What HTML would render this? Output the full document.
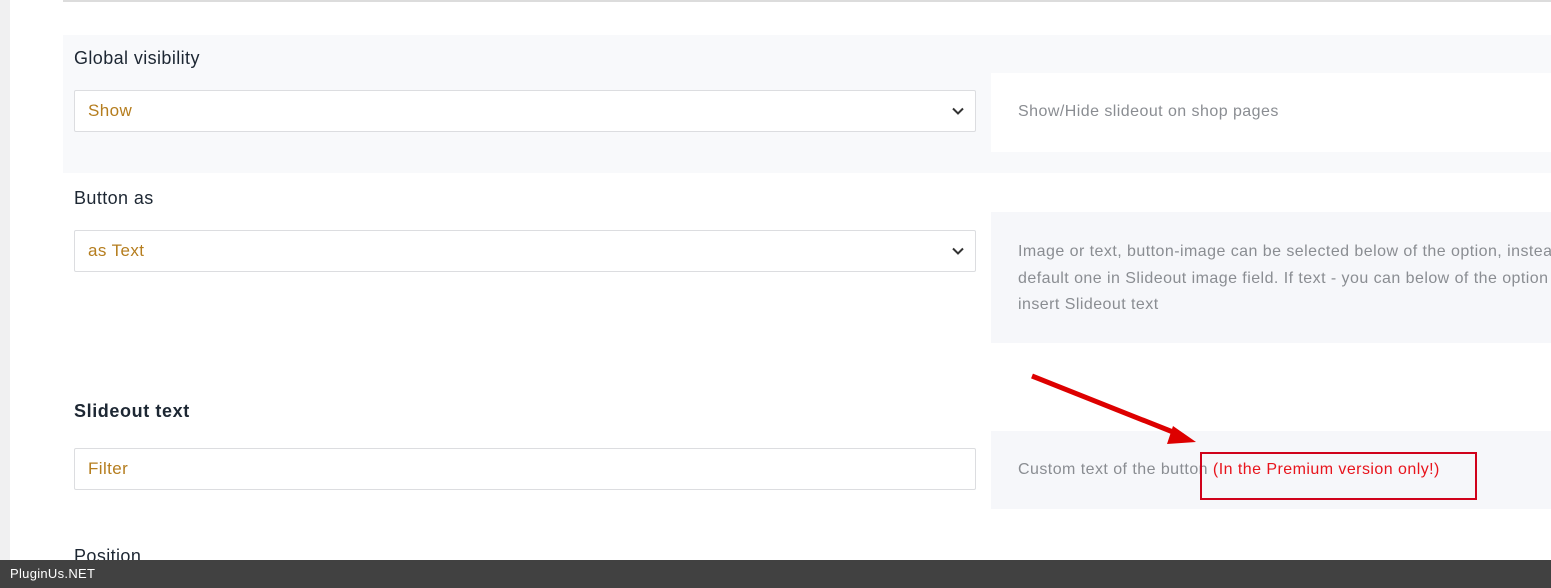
<!DOCTYPE html>
<html><head><style>
*{margin:0;padding:0;box-sizing:border-box}
body{width:1551px;height:588px;overflow:hidden;background:#fff;font-family:"Liberation Sans",sans-serif;position:relative}
.abs{position:absolute}
.lbl{font-size:18px;color:#1d2733;letter-spacing:0.4px}
.sel{background:#fff;border:1px solid #dcdde0;border-radius:2px;height:42px;width:902px;left:74px;color:#b57d1e;font-size:17px;padding:10px 13px;letter-spacing:0.4px}
.desc{font-size:16px;color:#8a8d92;line-height:26.5px;letter-spacing:0.45px}
.chev{position:absolute;right:10px;top:13px}
</style></head><body>
<div class="abs" style="left:0;top:0;width:10px;height:588px;background:#f0f0f1"></div>
<div class="abs" style="left:63px;top:0;width:1488px;height:2px;background:#dcdcdc"></div>
<div class="abs" style="left:63px;top:35px;width:1488px;height:138px;background:#f8f9fb"></div>
<div class="abs lbl" style="left:74px;top:48px">Global visibility</div>
<div class="abs sel" style="top:90px">Show<svg class="chev" width="14" height="14" viewBox="0 0 14 14"><path d="M2 4.5l5 5 5-5" fill="none" stroke="#333" stroke-width="2"/></svg></div>
<div class="abs" style="left:991px;top:73px;width:560px;height:79px;background:#fff"></div>
<div class="abs desc" style="left:1018px;top:99px">Show/Hide slideout on shop pages</div>

<div class="abs lbl" style="left:74px;top:188px">Button as</div>
<div class="abs sel" style="top:230px">as Text<svg class="chev" width="14" height="14" viewBox="0 0 14 14"><path d="M2 4.5l5 5 5-5" fill="none" stroke="#333" stroke-width="2"/></svg></div>
<div class="abs" style="left:991px;top:212px;width:560px;height:131px;background:#f6f7fa"></div>
<div class="abs desc" style="left:1018px;top:239px;white-space:nowrap">Image or text, button-image can be selected below of the option, instead<br>default one in Slideout image field. If text - you can below of the option<br>insert Slideout text</div>

<div class="abs lbl" style="left:74px;top:401px;font-weight:bold;font-size:18px;letter-spacing:0.6px">Slideout text</div>
<div class="abs sel" style="top:448px">Filter</div>
<div class="abs" style="left:991px;top:431px;width:560px;height:78px;background:#f6f7fa"></div>
<div class="abs desc" style="left:1018px;top:457px;white-space:nowrap">Custom text of the button <span style="color:#e8141c">(In the Premium version only!)</span></div>
<div class="abs" style="left:1200px;top:452px;width:277px;height:48px;border:2px solid #d0021b"></div>
<svg class="abs" style="left:1025px;top:370px" width="180" height="80"><line x1="7" y1="6" x2="158" y2="66" stroke="#d00" stroke-width="5"/><polygon points="171,72 148,56 142,74" fill="#d00"/></svg>

<div class="abs lbl" style="left:74px;top:546px">Position</div>
<div class="abs" style="left:0;top:560px;width:1551px;height:28px;background:#414141;color:#fff;font-size:13px;padding:6px 10px;letter-spacing:0.3px">PluginUs.NET</div>
</body></html>
